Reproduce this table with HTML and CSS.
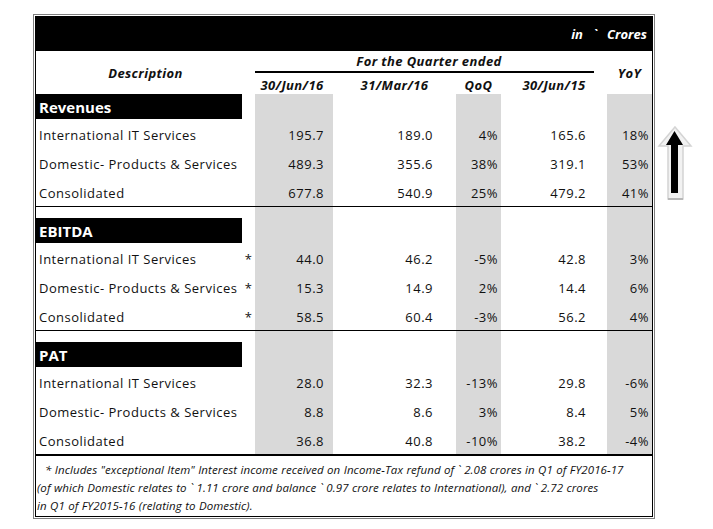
FILE: index.html
```html
<!DOCTYPE html>
<html>
<head>
<meta charset="utf-8">
<link rel="stylesheet" href="styles.css">
</head>
<body>
<div class="page">
  <div class="frame">
    <div class="inner">
      <div class="topbar"><span>in</span><span>`</span><span>Crores</span></div>

      <div class="thead">
        <div class="th-desc">Description</div>
        <div class="th-group">For the Quarter ended</div>
        <div class="th-yoy">YoY</div>
        <div class="th-date d1">30/Jun/16</div>
        <div class="th-date d2">31/Mar/16</div>
        <div class="th-date d3">QoQ</div>
        <div class="th-date d4">30/Jun/15</div>
      </div>

      <div class="row barrow">
        <div class="bar">Revenues</div><div></div><div class="c1"></div><div class="c2"></div><div class="c3"></div><div class="c4"></div><div class="c5"></div>
      </div>
      <div class="row">
        <div class="label">International IT Services</div><div class="star"></div><div class="c1">195.7</div><div class="c2">189.0</div><div class="c3">4%</div><div class="c4">165.6</div><div class="c5">18%</div>
      </div>
      <div class="row">
        <div class="label">Domestic- Products &amp; Services</div><div class="star"></div><div class="c1">489.3</div><div class="c2">355.6</div><div class="c3">38%</div><div class="c4">319.1</div><div class="c5">53%</div>
      </div>
      <div class="row">
        <div class="label">Consolidated</div><div class="star"></div><div class="c1">677.8</div><div class="c2">540.9</div><div class="c3">25%</div><div class="c4">479.2</div><div class="c5">41%</div>
      </div>
      <div class="sep"></div>

      <div class="row spacer">
        <div></div><div></div><div class="c1"></div><div class="c2"></div><div class="c3"></div><div class="c4"></div><div class="c5"></div>
      </div>
      <div class="row barrow">
        <div class="bar">EBITDA</div><div></div><div class="c1"></div><div class="c2"></div><div class="c3"></div><div class="c4"></div><div class="c5"></div>
      </div>
      <div class="row">
        <div class="label">International IT Services</div><div class="star">*</div><div class="c1">44.0</div><div class="c2">46.2</div><div class="c3">-5%</div><div class="c4">42.8</div><div class="c5">3%</div>
      </div>
      <div class="row">
        <div class="label">Domestic- Products &amp; Services</div><div class="star">*</div><div class="c1">15.3</div><div class="c2">14.9</div><div class="c3">2%</div><div class="c4">14.4</div><div class="c5">6%</div>
      </div>
      <div class="row">
        <div class="label">Consolidated</div><div class="star">*</div><div class="c1">58.5</div><div class="c2">60.4</div><div class="c3">-3%</div><div class="c4">56.2</div><div class="c5">4%</div>
      </div>
      <div class="sep"></div>

      <div class="row spacer">
        <div></div><div></div><div class="c1"></div><div class="c2"></div><div class="c3"></div><div class="c4"></div><div class="c5"></div>
      </div>
      <div class="row barrow">
        <div class="bar">PAT</div><div></div><div class="c1"></div><div class="c2"></div><div class="c3"></div><div class="c4"></div><div class="c5"></div>
      </div>
      <div class="row">
        <div class="label">International IT Services</div><div class="star"></div><div class="c1">28.0</div><div class="c2">32.3</div><div class="c3">-13%</div><div class="c4">29.8</div><div class="c5">-6%</div>
      </div>
      <div class="row">
        <div class="label">Domestic- Products &amp; Services</div><div class="star"></div><div class="c1">8.8</div><div class="c2">8.6</div><div class="c3">3%</div><div class="c4">8.4</div><div class="c5">5%</div>
      </div>
      <div class="row">
        <div class="label">Consolidated</div><div class="star"></div><div class="c1">36.8</div><div class="c2">40.8</div><div class="c3">-10%</div><div class="c4">38.2</div><div class="c5">-4%</div>
      </div>
      <div class="sep thick"></div>

      <div class="note"><span class="lead">* Includes "exceptional Item" Interest income received on Income-Tax refund of ` 2.08 crores in Q1 of FY2016-17</span><br>(of which Domestic relates to ` 1.11 crore and balance ` 0.97 crore relates to International), and ` 2.72 crores<br>in Q1 of FY2015-16 (relating to Domestic).</div>
    </div>
  </div>

  <svg class="arrow" width="40" height="85" viewBox="0 0 40 85">
    <polygon points="19,7 35,26 27,26 27,79 12,79 12,26 3,26" fill="#f2f2f2" stroke="#d4d4d4" stroke-width="1.5"/>
    <line x1="12" y1="79" x2="27" y2="79" stroke="#b8b8b8" stroke-width="2"/>
    <polygon points="18.5,11 27,25 22,25 22,73 15,73 15,25 10,25" fill="#000"/>
  </svg>
</div>
</body>
</html>
```

FILE: styles.css
```css
:root {
  --cols: 206px 13px 78px 123px 45px 106px 45px;
  --gray: #d9d9d9;
}

* { box-sizing: border-box; }

body {
  margin: 0;
  background: #fff;
  color: #111;
  font-family: "Open Sans", "Noto Sans", sans-serif;
}

.page {
  display: flex;
  align-items: flex-start;
  padding: 14px 0 0 33px;
}

.frame {
  border: 1px solid #7f7f7f;
  padding: 1px;
  background: #fff;
}

.inner {
  border: 1px solid #000;
  width: 618px;
}

.topbar {
  height: 34px;
  background: #000;
  color: #fff;
  display: flex;
  justify-content: flex-end;
  align-items: center;
  gap: 10px;
  padding-right: 5px;
  font-weight: 700;
  font-style: italic;
  font-size: 13px;
}

.thead {
  display: grid;
  grid-template-columns: var(--cols);
  grid-template-rows: 22px 21px;
  font-weight: 700;
  font-style: italic;
  font-size: 13px;
  letter-spacing: 0.4px;
}

.th-desc {
  grid-column: 1 / 3;
  grid-row: 1 / 3;
  display: flex;
  align-items: center;
  justify-content: center;
}

.th-group {
  grid-column: 3 / 7;
  grid-row: 1;
  margin-right: 13px;
  padding-left: 9px;
  border-bottom: 2px solid #000;
  display: flex;
  align-items: center;
  justify-content: center;
}

.th-yoy {
  grid-column: 7;
  grid-row: 1 / 3;
  display: flex;
  align-items: center;
  justify-content: center;
}

.th-date {
  grid-row: 2;
  display: flex;
  align-items: center;
  justify-content: center;
  padding-top: 2px;
}
.d1 { grid-column: 3; padding-right: 4px; }
.d2 { grid-column: 4; }
.d3 { grid-column: 5; }
.d4 { grid-column: 6; }

.row {
  display: grid;
  grid-template-columns: var(--cols);
  height: 29px;
  font-size: 13px;
  letter-spacing: 0.5px;
}

.row > div {
  display: flex;
  align-items: center;
  padding-top: 2px;
  white-space: nowrap;
}

.barrow { height: 25px; }
.spacer { height: 11px; }

.row > .bar {
  background: #000;
  color: #fff;
  font-weight: 700;
  font-size: 15px;
  letter-spacing: 0;
  padding: 0 0 0 3px;
}

.label { padding-left: 3px; }
.star { justify-content: center; }

.c1, .c2, .c3, .c4, .c5 { justify-content: flex-end; }
.row > .c1 { padding-right: 9px; }
.row > .c2 { padding-right: 23px; }
.row > .c3 { padding-right: 3px; }
.row > .c4 { padding-right: 21px; }
.row > .c5 { padding-right: 3px; }

.c1, .c3, .c5 { background: var(--gray); }

.sep { height: 1px; background: #000; }
.sep.thick { height: 2px; }

.note {
  height: 60px;
  padding: 5px 0 0 1px;
  font-style: italic;
  font-size: 11.5px;
  letter-spacing: 0.08px;
  word-spacing: 0.3px;
  line-height: 18px;
  white-space: nowrap;
}

.lead { padding-left: 8px; }

.arrow {
  margin-top: 106px;
  margin-left: 1px;
}
```
